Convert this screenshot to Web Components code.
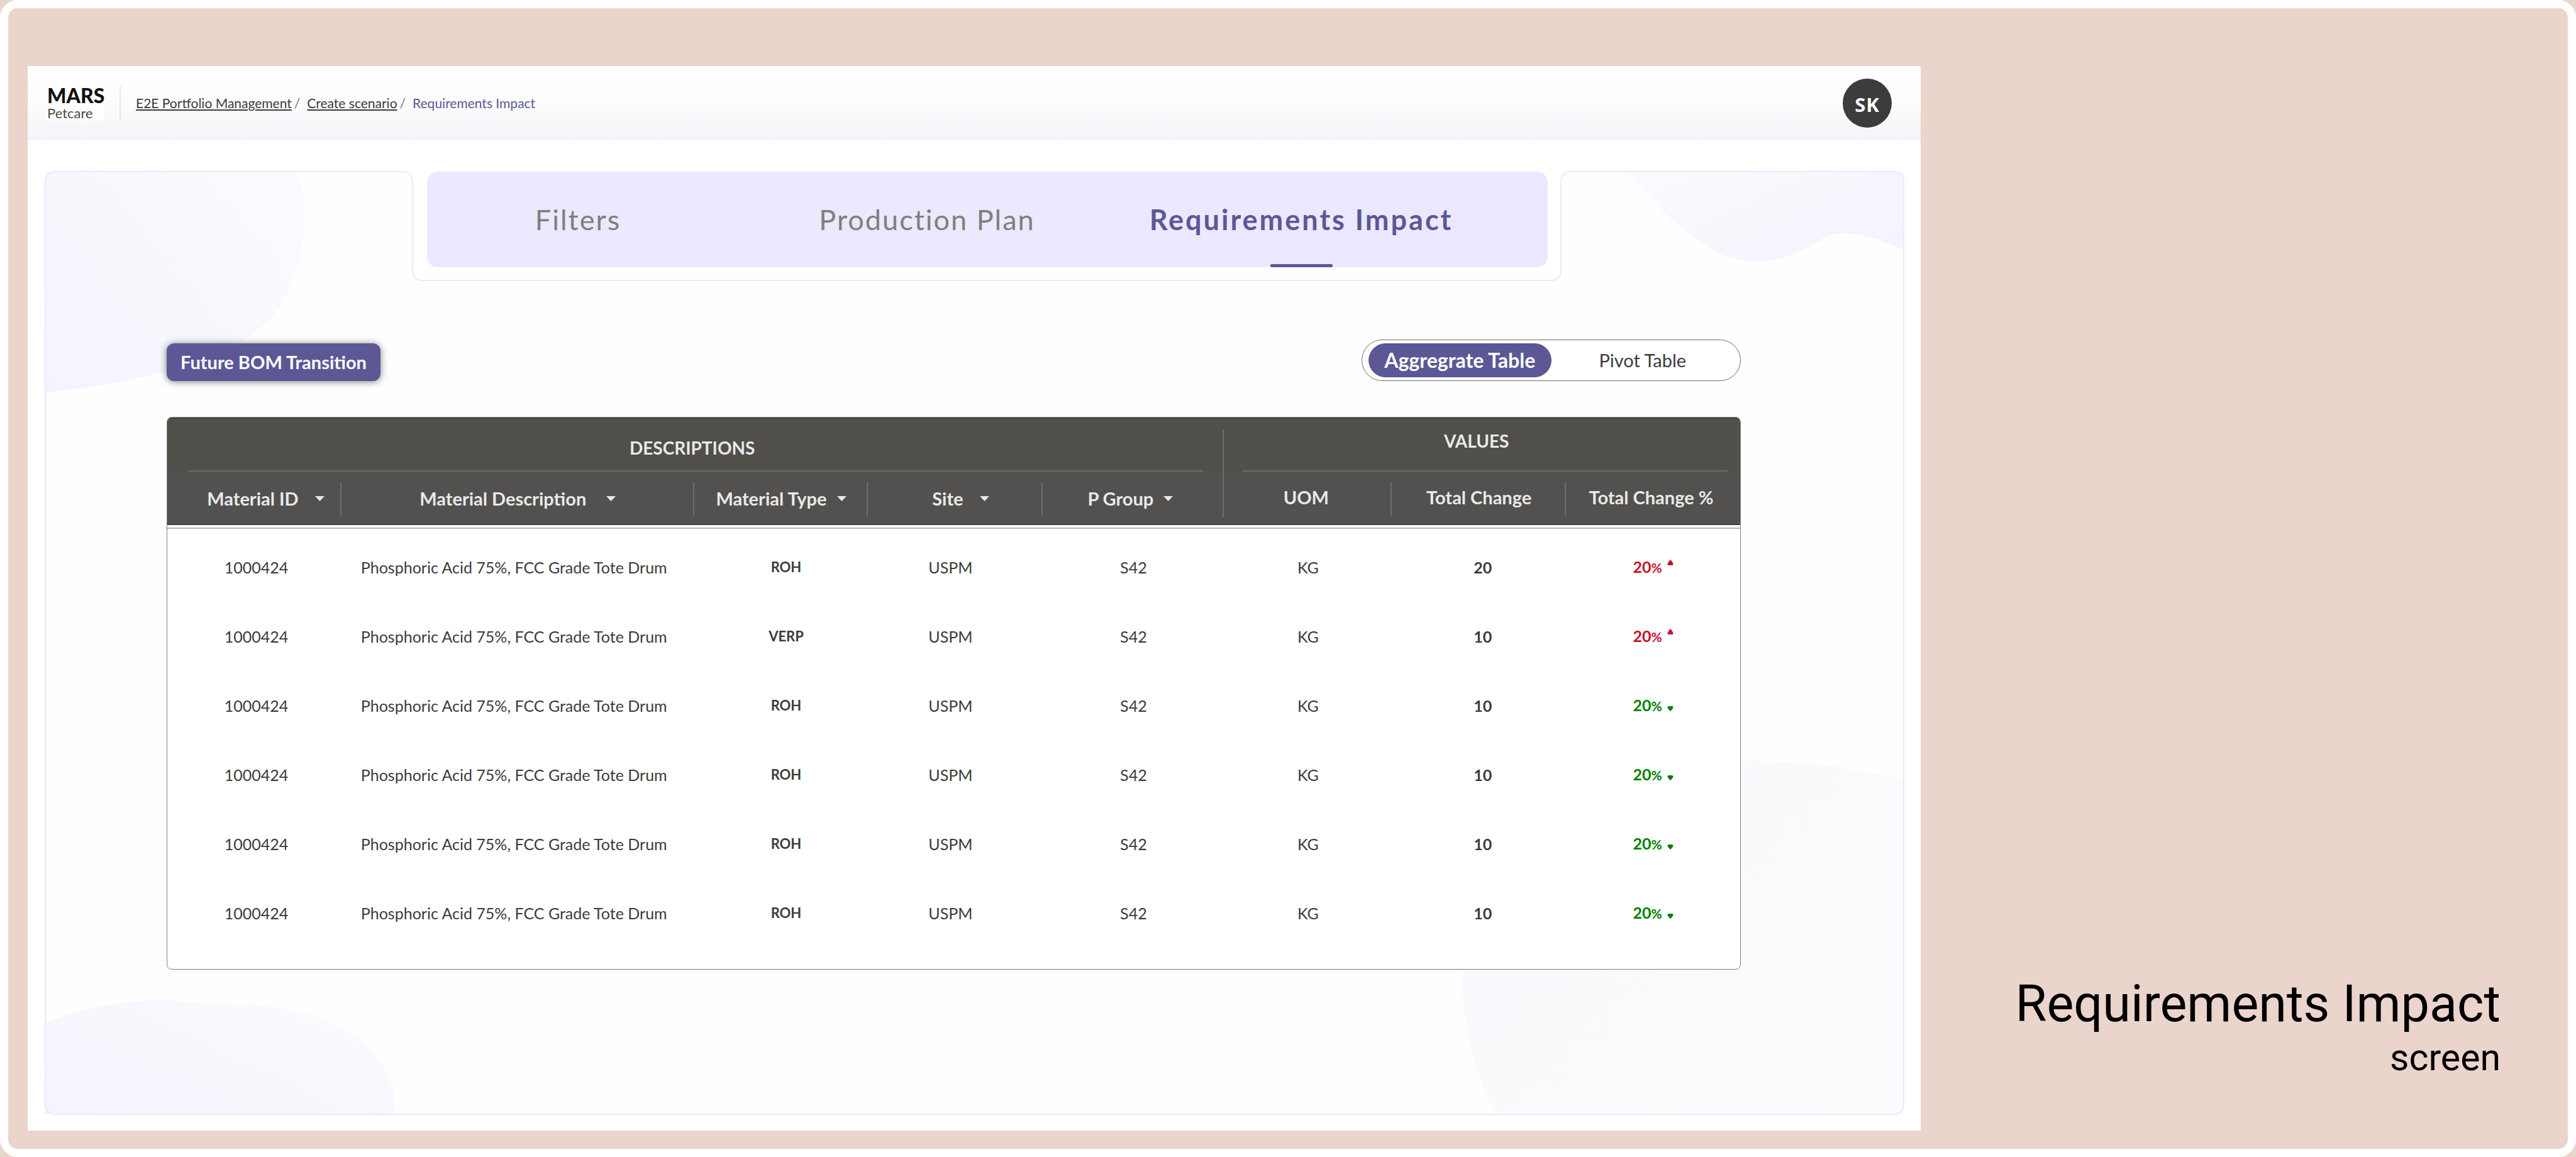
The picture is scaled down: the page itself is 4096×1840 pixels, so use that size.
<!DOCTYPE html>
<html lang="en">
<head>
<meta charset="utf-8">
<title>Requirements Impact</title>
<style>
  html { background: #ead4cc; }
  body { margin: 0; font-family: Lato, "Open Sans", sans-serif; color: #3c3c3c; }
</style>
</head>
<body>
<showcase-frame>
  <app-window>
    <app-header slot="header"></app-header>
    <scenario-card>
      <tab-bar slot="tabs"></tab-bar>
      <table-toolbar></table-toolbar>
      <impact-table></impact-table>
    </scenario-card>
  </app-window>
  <screen-caption slot="caption"></screen-caption>
</showcase-frame>

<script>
const define = (name, html) => customElements.define(name, class extends HTMLElement {
  constructor() {
    super();
    const t = document.createElement('template');
    t.innerHTML = html;
    this.attachShadow({ mode: 'open' }).append(t.content.cloneNode(true));
  }
});

define('showcase-frame', `
<style>
  :host { display: flex; box-sizing: border-box; min-height: 100vh; border: 13px solid #fff; border-radius: 28px;
    background: #ead4cc; padding: 92px 0 29px 31px; }
  .main { flex: 3010 1 0; display: flex; min-width: 0; }
  .side { flex: 1029 1 0; display: flex; min-width: 0; }
  ::slotted(*) { flex: 1; min-width: 0; }
</style>
<div class="main"><slot></slot></div>
<div class="side"><slot name="caption"></slot></div>`);

define('app-window', `
<style>
  :host { display: flex; flex-direction: column; background: #fff; }
  main { flex: 1; display: flex; padding: 50px 27px 26px 28px; }
  ::slotted(scenario-card) { flex: 1; }
</style>
<slot name="header"></slot>
<main><slot></slot></main>`);

define('app-header', `
<style>
  :host { display: block; }
  header { display: flex; align-items: center; gap: 24px; height: 118px; box-sizing: border-box; padding: 0 46px 0 31px;
    background: linear-gradient(#fff 20%, #fbfbfc 60%, #f4f4fa); }
  .logo { width: 91px; background: #fff; color: #111; }
  .mars { display: block; font-size: 32px; line-height: 32px; font-weight: 900; }
  .pet { display: block; font-size: 22px; line-height: 24px; color: #4a4a4a; }
  .rule { width: 2px; height: 54px; background: #e6e6ea; }
  nav ol { display: flex; margin: 0; padding: 0; list-style: none; font-size: 21px; line-height: 26px; }
  li + li::before { content: "/"; color: #777; padding: 0 11px 0 4px; }
  a { color: #3c3c3c; text-decoration: underline; text-decoration-thickness: 2px; text-underline-offset: 2px; }
  a[aria-current] { color: #5c5895; text-decoration: none; }
  button { margin-left: auto; width: 78px; height: 78px; border: 0; border-radius: 50%; padding: 4px 0 0; background: #3c3c3c;
    color: #fff; font: 700 31px "Open Sans", sans-serif; letter-spacing: 1px; }
</style>
<header>
  <div class="logo"><span class="mars">MARS</span><span class="pet">Petcare</span></div>
  <div class="rule"></div>
  <nav aria-label="Breadcrumb"><ol>
    <li><a href="#portfolio">E2E Portfolio Management</a></li>
    <li><a href="#scenario">Create scenario</a></li>
    <li><a href="#impact" aria-current="page">Requirements Impact</a></li>
  </ol></nav>
  <button type="button">SK</button>
</header>`);

define('scenario-card', `
<style>
  :host { display: grid; grid-template: minmax(0, 1fr) / minmax(0, 1fr); }
  svg, .content { grid-area: 1 / 1; min-width: 0; }
  svg { width: 100%; height: 100%; min-height: 0; overflow: visible; }
  .content { z-index: 1; display: flex; flex-direction: column; }
  .tabs { display: grid; grid-template-columns: 607fr 1782fr 566fr; }
  .tabs ::slotted(*) { grid-column: 2; }
  .body { display: flex; flex-direction: column; gap: 57px; padding: 115px 259px 0 193px; }
</style>
<svg viewBox="0 0 2955 1499" preserveAspectRatio="none" aria-hidden="true">
  <defs>
    <linearGradient id="tl" x1="0" y1="1" x2="1" y2="0.3"><stop offset="0" stop-color="#f4f3ff"/><stop offset=".55" stop-color="#f7f8fd"/><stop offset="1" stop-color="#fafaff"/></linearGradient>
    <linearGradient id="tr" x1="1" y1=".7" x2="0" y2="0"><stop offset="0" stop-color="#f4f3ff"/><stop offset=".5" stop-color="#f7f8fd"/><stop offset="1" stop-color="#fbfaff"/></linearGradient>
    <linearGradient id="br" x1="0" y1="0" x2="1" y2=".8"><stop offset="0" stop-color="#f9f8fe"/><stop offset=".5" stop-color="#fafafd"/><stop offset="1" stop-color="#fcfcfe"/></linearGradient>
  </defs>
  <path fill="#fefefe" d="M17 0H567Q584 0 584 17V156Q584 173 601 173H2393Q2410 173 2410 156V17Q2410 0 2427 0H2938Q2955 0 2955 17V1482Q2955 1499 2938 1499H17Q0 1499 0 1482V17Q0 0 17 0Z"/>
  <path fill="url(#tl)" d="M403 0C418 70 416 140 374 213C316 300 150 335 0 351V0Z"/>
  <path fill="url(#tr)" d="M2508 0C2548 30 2570 65 2599 86C2640 122 2680 143 2719 143C2765 143 2798 125 2824 108C2848 90 2900 98 2955 125V0Z"/>
  <path fill="url(#tl)" d="M0 1353C60 1330 120 1318 183 1318C225 1318 250 1325 303 1325C400 1325 470 1355 505 1382C545 1420 557 1460 557 1499H0Z"/>
  <path fill="url(#br)" d="M2307 1499C2265 1420 2253 1350 2253 1270C2253 1080 2450 937 2720 937C2810 939 2890 950 2955 968V1499Z"/>
  <path fill="none" stroke="#ebe8ff" stroke-width="2" d="M17 0H567Q584 0 584 17V156Q584 173 601 173H2393Q2410 173 2410 156V17Q2410 0 2427 0H2938Q2955 0 2955 17V1482Q2955 1499 2938 1499H17Q0 1499 0 1482V17Q0 0 17 0Z"/>
</svg>
<div class="content">
  <div class="tabs"><slot name="tabs"></slot></div>
  <div class="body"><slot></slot></div>
</div>`);

define('tab-bar', `
<style>
  :host { display: grid; grid-template-columns: 480fr 630fr 560fr; padding-right: 112px; height: 152px;
    background: #ebe8ff; border-radius: 17px; }
  button { display: flex; flex-direction: column; align-items: center; justify-content: flex-end; gap: 44px; border: 0; padding: 0;
    background: none; font: 400 45px/54px Lato, sans-serif; letter-spacing: 2px; color: #7f7f7c; white-space: nowrap; }
  button::after { content: ""; width: 99px; height: 5px; border-radius: 2px; }
  button[aria-selected="true"] { font-weight: 700; letter-spacing: 3px; color: #5c5895; }
  button[aria-selected="true"]::after { background: #5c5895; }
</style>
<button type="button" role="tab" aria-selected="false">Filters</button>
<button type="button" role="tab" aria-selected="false">Production Plan</button>
<button type="button" role="tab" aria-selected="true">Requirements Impact</button>`);

define('table-toolbar', `
<style>
  :host { display: flex; justify-content: space-between; align-items: flex-end; }
  button { font-family: Lato, sans-serif; border: 0; padding: 0 0 2px; white-space: nowrap; }
  .bom { width: 340px; height: 60px; border-radius: 12px; background: #5c5895; color: #fff; font-size: 29px; font-weight: 700;
    box-shadow: 0 1px 12px rgba(0,0,0,.5); }
  .switch { display: flex; box-sizing: border-box; width: 603px; height: 66px; padding: 5px 10px; border: 1px solid #6e6e6e;
    border-radius: 33px; background: #fff; }
  .switch button { flex: 1; border-radius: 27px; background: none; color: #3c3c3c; font-size: 29px; }
  .switch button[aria-pressed="true"] { background: #5c5895; color: #fff; font-weight: 700; font-size: 32px; }
</style>
<button type="button" class="bom">Future BOM Transition</button>
<div class="switch" role="group" aria-label="Table type">
  <button type="button" aria-pressed="true">Aggregrate Table</button>
  <button type="button" aria-pressed="false">Pivot Table</button>
</div>`);

const rows = [['ROH', 20, 'up'], ['VERP', 10, 'up'], ['ROH', 10, 'down'], ['ROH', 10, 'down'], ['ROH', 10, 'down'], ['ROH', 10, 'down']];
const caret = '<svg width="15" height="8" viewBox="0 0 15 8" aria-hidden="true"><path fill="#e9e9e9" d="M0 0H15L7.5 8Z"/></svg>';
const trend = {
  up: '<svg class="t" width="10" height="9" viewBox="0 0 10 9" aria-hidden="true"><path fill="#c8102e" d="M5 0C5.500 0 10 6 9.500 7.500Q9 9 7.500 9H2.500Q1 9 .5 7.500C0 6 4.500 0 5 0Z"/></svg>',
  down: '<svg class="t" width="10" height="8" viewBox="0 0 10 8" aria-hidden="true"><path fill="#008000" d="M2.500 0H7.500Q9 0 9.500 1.500C10 3 5.500 8 5 8C4.500 8 0 3 .5 1.500Q1 0 2.500 0Z"/></svg>'
};

define('impact-table', `
<style>
  :host { display: block; box-sizing: border-box; border: 1px solid #808080; border-radius: 8px; overflow: hidden;
    background: #fff; padding-bottom: 34px; }
  table { width: 100%; table-layout: fixed; border-collapse: separate; border-spacing: 0; }
  th { height: 86px; box-sizing: border-box; padding: 0; font-size: 29px; line-height: 36px; font-weight: 700; color: #e9e9e9; white-space: nowrap; }
  .groups th { font-size: 28px; background: #504f4a; box-shadow: inset 0 2px #3f3f3f; vertical-align: bottom; }
  .groups span { display: block; box-sizing: border-box; height: 67px; border-bottom: 2px solid #6c6b69; }
  .groups .desc { padding: 0 33px 0 32px; background: linear-gradient(#6e6d6b, #6e6d6b) right 19px / 2px 67px no-repeat #504f4a; }
  .groups .desc span { padding: 11px 10px 0 0; }
  .groups .vals { padding: 0 20px 0 30px; }
  .groups .vals span { padding-right: 28px; }
  .cols th { height: 89px; padding-bottom: 3px; border-bottom: 4px solid #fff; box-shadow: inset 0 -2px #3f3f3f;
    background: linear-gradient(#6e6d6b, #6e6d6b) right 17px / 2px 54px no-repeat padding-box, #52514f padding-box; }
  .cols th:nth-child(5) { background: linear-gradient(#6e6d6b, #6e6d6b) right 0 / 2px 73px no-repeat padding-box, #52514f padding-box; }
  .cols th:last-child { background: #52514f padding-box; padding-right: 6px; }
  th button { display: inline-flex; align-items: center; border: 0; padding: 0; background: none; color: inherit; font: inherit; gap: 16px; vertical-align: middle; }
  th .w { gap: 26px; }
  th .x { gap: 32px; }
  .cols th:nth-child(1) { padding-left: 36px; }
  .cols th:nth-child(4) { padding-left: 16px; }
  .cols th:nth-child(5) { padding-right: 10px; }
  .cols th:nth-child(6) { padding-right: 6px; }
  td { height: 110px; box-sizing: border-box; padding: 0; text-align: center; font-size: 25px; line-height: 30px; white-space: nowrap; }
  tbody tr:first-child td { height: 118px; padding-top: 6px; border-top: 2px solid #b5b5b5; }
  td:nth-child(1) { padding-left: 6px; }
  td:nth-child(2) { padding-right: 12px; }
  td:nth-child(3) { padding-left: 16px; font-size: 22px; font-weight: 700; }
  td:nth-child(4) { padding-right: 16px; }
  td:nth-child(7) { padding-left: 12px; font-weight: 700; }
  td:nth-child(8) { font-weight: 700; }
  .pct { display: inline-flex; align-items: baseline; }
  .pct small { font-size: 21px; }
  .pct .t { margin-left: 8px; }
  .up { color: #c8102e; }
  .up .t { align-self: flex-start; margin-top: 4px; }
  .down { color: #008000; }
</style>
<table>
  <colgroup>
    <col style="width:11.07%"><col style="width:22.42%"><col style="width:11.07%"><col style="width:11.11%">
    <col style="width:11.52%"><col style="width:10.67%"><col style="width:11.07%"><col style="width:11.07%">
  </colgroup>
  <thead>
    <tr class="groups"><th class="desc" colspan="5" scope="colgroup"><span>DESCRIPTIONS</span></th><th class="vals" colspan="3" scope="colgroup"><span>VALUES</span></th></tr>
    <tr class="cols">
      <th scope="col"><button type="button" class="w">Material ID${caret}</button></th>
      <th scope="col"><button type="button" class="x">Material Description${caret}</button></th>
      <th scope="col"><button type="button">Material Type${caret}</button></th>
      <th scope="col"><button type="button" class="w">Site${caret}</button></th>
      <th scope="col"><button type="button">P Group${caret}</button></th>
      <th scope="col">UOM</th><th scope="col">Total Change</th><th scope="col">Total Change %</th>
    </tr>
  </thead>
  <tbody>${rows.map(([type, n, dir]) => `<tr><td>1000424</td><td>Phosphoric Acid 75%, FCC Grade Tote Drum</td><td>${type}</td><td>USPM</td><td>S42</td><td>KG</td><td>${n}</td><td><span class="pct ${dir}">20<small>%</small>${trend[dir]}</span></td></tr>`).join('')}</tbody>
</table>`);

define('screen-caption', `
<style>
  :host { display: flex; flex-direction: column; justify-content: flex-end; align-items: flex-end; box-sizing: border-box;
    padding: 0 107px 79px 0; color: #000; font-family: Roboto, sans-serif; white-space: nowrap; }
  h1 { margin: 0; font-size: 81px; line-height: 96px; font-weight: 400; }
  p { margin: 0; font-size: 59px; line-height: 74px; }
</style>
<h1>Requirements Impact</h1>
<p>screen</p>`);
</script>
</body>
</html>
